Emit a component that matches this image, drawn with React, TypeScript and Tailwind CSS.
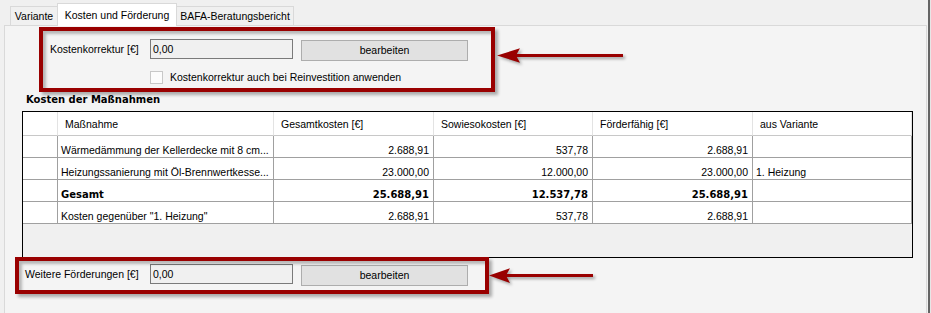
import React from "react";

type Row = { name: string; g: string; s: string; f: string; v: string; bold?: boolean };

const rows: Row[] = [
  { name: "Wärmedämmung der Kellerdecke mit 8 cm...", g: "2.688,91", s: "537,78", f: "2.688,91", v: "" },
  { name: "Heizungssanierung mit Öl-Brennwertkesse...", g: "23.000,00", s: "12.000,00", f: "23.000,00", v: "1. Heizung" },
  { name: "Gesamt", g: "25.688,91", s: "12.537,78", f: "25.688,91", v: "", bold: true },
  { name: "Kosten gegenüber \"1. Heizung\"", g: "2.688,91", s: "537,78", f: "2.688,91", v: "" },
];

function HeadCell({ children }: { children?: React.ReactNode }) {
  return (
    <div className="flex h-[24px] items-start overflow-hidden whitespace-nowrap border-b border-r border-b-[#c8c8c8] border-r-[#e3e3e3] bg-white pl-[7px] pt-[6px]">
      {children}
    </div>
  );
}

function BodyCell({ children, right, bold }: { children?: React.ReactNode; right?: boolean; bold?: boolean }) {
  const base = "flex h-[22px] items-end overflow-hidden whitespace-nowrap border-b border-r border-[#a0a0a0] bg-white";
  const align = right ? " justify-end pr-[4px]" : " pl-[3px]";
  const font = bold ? " font-['DejaVu_Sans',sans-serif] text-[10px] font-bold" : "";
  return <div className={base + align + font}>{children}</div>;
}

export default function App() {
  return (
    <div className="relative flex h-[313px] w-[931px] overflow-hidden bg-[#f0f0f0] font-['Liberation_Sans',Arial,sans-serif] text-[10.5px] leading-[13px] text-black">
      <div className="flex w-[928px] flex-col">
        {/* tab strip */}
        <div className="flex h-[25px] items-end pl-[10px]">
          <div className="flex h-[19px] w-[47px] items-center justify-center border-l border-t border-[#d9d9d9]">
            Variante
          </div>
          <div className="relative z-10 mb-[-1px] flex h-[23px] w-[120px] items-center justify-center border-x border-t border-[#d9d9d9] bg-white">
            Kosten und Förderung
          </div>
          <div className="flex h-[19px] w-[117px] items-center justify-center border-r border-t border-[#d9d9d9]">
            BAFA-Beratungsbericht
          </div>
        </div>

        {/* tab page */}
        <div className="ml-[4px] flex w-[923px] flex-1 flex-col border-x border-t border-[#d9d9d9] bg-[#f4f4f4]">
          <div className="mt-[13px] flex items-start pl-[45px]">
            <div className="flex h-[20px] w-[100px] items-center">Kostenkorrektur [€]</div>
            <div className="flex h-[20px] w-[143px] items-center border border-[#7a7a7a] bg-[#f0f0f0] pl-[2px]">0,00</div>
            <div className="ml-[8px] mt-[1px] flex h-[21px] w-[167px] items-center justify-center border border-[#adadad] bg-[#e1e1e1]">
              bearbeiten
            </div>
          </div>

          <div className="mt-[10px] flex h-[13px] items-center pl-[145px]">
            <div className="h-[13px] w-[13px] border border-[#c8c8c8] bg-[#fcfcfc]" />
            <div className="ml-[7px]">Kostenkorrektur auch bei Reinvestition anwenden</div>
          </div>

          <div className="mt-[9px] pl-[21px] font-['DejaVu_Sans',sans-serif] text-[10px] font-bold leading-[13px]">
            Kosten der Maßnahmen
          </div>

          <div className="ml-[17px] mt-[5px] h-[147px] w-[891px] border border-black bg-[#f0f0f0]">
            <div className="grid grid-cols-[35px_216px_160px_159px_160px_159px]">
              <HeadCell />
              <HeadCell>Maßnahme</HeadCell>
              <HeadCell>Gesamtkosten [€]</HeadCell>
              <HeadCell>Sowiesokosten [€]</HeadCell>
              <HeadCell>Förderfähig [€]</HeadCell>
              <HeadCell>aus Variante</HeadCell>
              {rows.map((r, i) => (
                <React.Fragment key={i}>
                  <BodyCell />
                  <BodyCell bold={r.bold}>{r.name}</BodyCell>
                  <BodyCell right bold={r.bold}>{r.g}</BodyCell>
                  <BodyCell right bold={r.bold}>{r.s}</BodyCell>
                  <BodyCell right bold={r.bold}>{r.f}</BodyCell>
                  <BodyCell>{r.v}</BodyCell>
                </React.Fragment>
              ))}
            </div>
          </div>

          <div className="mt-[6px] flex items-start pl-[20px]">
            <div className="flex h-[20px] w-[125px] items-center">Weitere Förderungen [€]</div>
            <div className="flex h-[20px] w-[143px] items-center border border-[#7a7a7a] bg-[#f0f0f0] pl-[2px]">0,00</div>
            <div className="ml-[8px] mt-[1px] flex h-[21px] w-[167px] items-center justify-center border border-[#adadad] bg-[#e1e1e1]">
              bearbeiten
            </div>
          </div>
        </div>
      </div>
      <div className="w-[2px] bg-[#646464]" />
      <div className="w-[1px] bg-[#e6e6e6]" />

      {/* annotation overlays */}
      <div className="absolute left-[39px] top-[27px] h-[65px] w-[456px] border-4 border-[#990000] shadow-[3px_3px_3px_rgba(0,0,0,0.3),inset_3px_3px_3px_rgba(0,0,0,0.25)]" />
      <div className="absolute left-[15px] top-[257px] h-[37px] w-[474px] border-4 border-[#990000] shadow-[3px_3px_3px_rgba(0,0,0,0.3),inset_3px_3px_3px_rgba(0,0,0,0.25)]" />

      <svg className="absolute left-[495px] top-[45px] drop-shadow-[2px_2px_1.5px_rgba(0,0,0,0.35)]" width="134" height="24" viewBox="0 0 134 24">
        <line x1="20" y1="10.5" x2="128" y2="10.5" stroke="#990000" strokeWidth="3" />
        <polygon points="2,10.5 25,3.3 21,10.5 25,17.7" fill="#990000" />
      </svg>
      <svg className="absolute left-[487px] top-[265px] drop-shadow-[2px_2px_1.5px_rgba(0,0,0,0.35)]" width="112" height="24" viewBox="0 0 112 24">
        <line x1="18" y1="10.5" x2="106" y2="10.5" stroke="#990000" strokeWidth="3" />
        <polygon points="2,10.5 23,3.3 19,10.5 23,18" fill="#990000" />
      </svg>
    </div>
  );
}
